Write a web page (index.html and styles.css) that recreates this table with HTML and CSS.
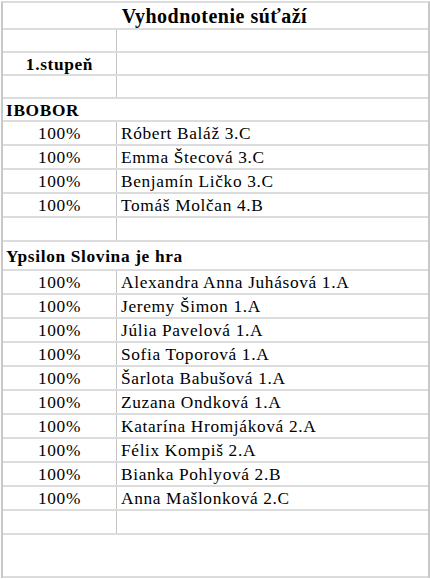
FILE: index.html
```html
<!DOCTYPE html>
<html lang="sk">
<head>
<meta charset="utf-8">
<title>Vyhodnotenie súťaží</title>
<link rel="stylesheet" href="styles.css">
</head>
<body>
<div class="sheet">
  <div class="row row-title"><div class="cell full title">Vyhodnotenie súťaží</div></div>
  <div class="row row-sm"><div class="cell left"></div><div class="cell right"></div></div>
  <div class="row row-sm"><div class="cell left center bold">1.stupeň</div><div class="cell right"></div></div>
  <div class="row row-sm"><div class="cell left"></div><div class="cell right"></div></div>
  <div class="row row-sm"><div class="cell full bold section">IBOBOR</div></div>

  <div class="row"><div class="cell left center">100%</div><div class="cell right">Róbert Baláž 3.C</div></div>
  <div class="row"><div class="cell left center">100%</div><div class="cell right">Emma Štecová 3.C</div></div>
  <div class="row"><div class="cell left center">100%</div><div class="cell right">Benjamín Ličko 3.C</div></div>
  <div class="row"><div class="cell left center">100%</div><div class="cell right">Tomáš Molčan 4.B</div></div>
  <div class="row"><div class="cell left"></div><div class="cell right"></div></div>

  <div class="row row-section"><div class="cell full bold section">Ypsilon Slovina je hra</div></div>

  <div class="row"><div class="cell left center">100%</div><div class="cell right">Alexandra Anna Juhásová 1.A</div></div>
  <div class="row"><div class="cell left center">100%</div><div class="cell right">Jeremy Šimon 1.A</div></div>
  <div class="row"><div class="cell left center">100%</div><div class="cell right">Júlia Pavelová 1.A</div></div>
  <div class="row"><div class="cell left center">100%</div><div class="cell right">Sofia Toporová 1.A</div></div>
  <div class="row"><div class="cell left center">100%</div><div class="cell right">Šarlota Babušová 1.A</div></div>
  <div class="row"><div class="cell left center">100%</div><div class="cell right">Zuzana Ondková 1.A</div></div>
  <div class="row"><div class="cell left center">100%</div><div class="cell right">Katarína Hromjáková 2.A</div></div>
  <div class="row"><div class="cell left center">100%</div><div class="cell right">Félix Kompiš 2.A</div></div>
  <div class="row"><div class="cell left center">100%</div><div class="cell right">Bianka Pohlyová 2.B</div></div>
  <div class="row"><div class="cell left center">100%</div><div class="cell right">Anna Mašlonková 2.C</div></div>
  <div class="row"><div class="cell left"></div><div class="cell right"></div></div>
  <div class="row row-tall"><div class="cell full"></div></div>
</div>
</body>
</html>
```

FILE: styles.css
```css
html, body {
  margin: 0;
  padding: 0;
  background: #ffffff;
}

body {
  font-family: "Liberation Serif", "Times New Roman", serif;
  color: #000000;
  font-size: 17.33px;
  letter-spacing: 0.65px;
}

.sheet {
  width: 425px;
  margin: 1px 0 0 1px;
  border-left: 2px solid #c8c8c8;
  border-right: 2px solid #c8c8c8;
  border-top: 2px solid #dcdcdc;
}

.row {
  display: flex;
  height: 22px;
  border-bottom: 2px solid #dcdcdc;
}

.row-title {
  height: 25px;
}

.row-sm {
  height: 21px;
}

.row-section {
  height: 27px;
}

.row-tall {
  height: 41px;
}

.cell {
  display: flex;
  align-items: center;
  white-space: nowrap;
  overflow: hidden;
  padding-top: 2px;
}

.left {
  width: 113px;
  border-right: 1px solid #c4c4c4;
}

.right {
  flex: 1;
  padding-left: 4px;
}

.full {
  flex: 1;
}

.center {
  justify-content: center;
}

.bold {
  font-weight: bold;
}

.title {
  justify-content: center;
  font-weight: bold;
  font-size: 20px;
  letter-spacing: 0.5px;
  padding-right: 2px;
  padding-top: 1px;
}

.section {
  padding-left: 3px;
}
```
